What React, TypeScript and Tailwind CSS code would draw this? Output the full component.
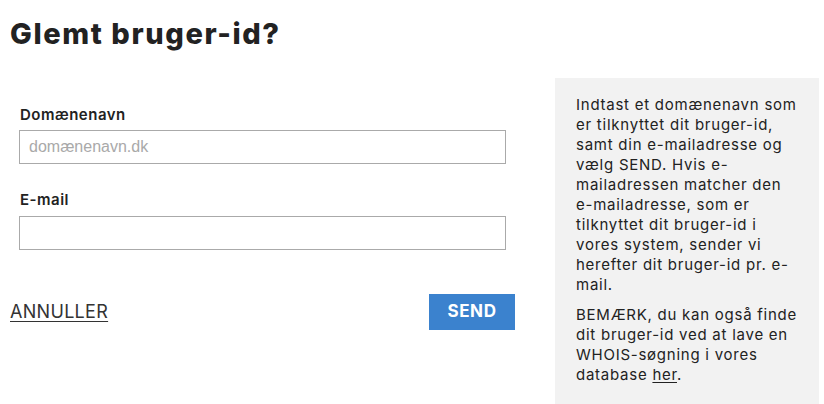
import React from 'react';

const panelLines1 = [
  'Indtast et domænenavn som',
  'er tilknyttet dit bruger-id,',
  'samt din e-mailadresse og',
  'vælg SEND. Hvis e-',
  'mailadressen matcher den',
  'e-mailadresse, som er',
  'tilknyttet dit bruger-id i',
  'vores system, sender vi',
  'herefter dit bruger-id pr. e-',
  'mail.',
];

const panelLines2 = [
  'BEMÆRK, du kan også finde',
  'dit bruger-id ved at lave en',
  'WHOIS-søgning i vores',
];

const App: React.FC = () => {
  return (
    <div className="w-[824px] h-[404px] bg-white overflow-hidden pl-[10px] pr-[5px] text-[#222] font-['Inter','Liberation_Sans',sans-serif]">
      {/* Title */}
      <h1 className="pt-[17px] text-[29px] leading-[34px] font-extrabold tracking-[1.6px] text-[#222]">
        Glemt bruger-id?
      </h1>

      <div className="flex mt-[27px] gap-[40px]">
        {/* Form */}
        <div className="w-[505px] flex flex-col">
          <div className="pl-[9px] pt-[27px]">
            <label className="block pl-px text-[15px] leading-[20px] font-semibold tracking-[0.5px]">Domænenavn</label>
            <input
              type="text"
              placeholder="domænenavn.dk"
              className="mt-[5px] w-[487px] h-[34px] border border-[#aaa] px-[9px] text-[16px] font-['Liberation_Sans',Arial,sans-serif] placeholder:text-[#a9a9a9] outline-none"
            />
            <label className="block pl-px mt-[26px] text-[15px] leading-[20px] font-semibold tracking-[0.5px]">E-mail</label>
            <input
              type="text"
              className="mt-[6px] w-[487px] h-[34px] border border-[#aaa] px-[9px] text-[16px] font-['Liberation_Sans',Arial,sans-serif] outline-none"
            />
          </div>

          <div className="flex items-center justify-between mt-[44px]">
            <a href="#" className="text-[18px] leading-[22px] text-[#333] underline underline-offset-[3px] tracking-[0.3px]">
              ANNULLER
            </a>
            <button className="w-[86px] h-[36px] bg-[#3b82ce] text-white text-[17px] font-bold tracking-[0.6px]">
              SEND
            </button>
          </div>
        </div>

        {/* Info panel */}
        <div className="w-[264px] h-[326px] bg-[#f2f2f2] pl-[21px] pt-[17px] text-[15px] leading-[20px] tracking-[0.75px] text-[#222]">
          <p>
            {panelLines1.map((l) => (
              <span key={l} className="block whitespace-nowrap">{l}</span>
            ))}
          </p>
          <p className="mt-[10px]">
            {panelLines2.map((l) => (
              <span key={l} className="block whitespace-nowrap">{l}</span>
            ))}
            <span className="block whitespace-nowrap">
              database <a href="#" className="underline underline-offset-2">her</a>.
            </span>
          </p>
        </div>
      </div>
    </div>
  );
};

export default App;
